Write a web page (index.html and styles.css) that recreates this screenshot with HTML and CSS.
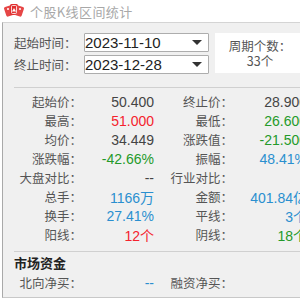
FILE: index.html
```html
<!DOCTYPE html>
<html lang="zh-CN">
<head>
  <meta charset="UTF-8">
  <title>个股K线区间统计</title>
  <link rel="stylesheet" href="styles.css">
</head>
<body>
  <div class="titlebar">
    <svg class="logo" width="20" height="14" viewBox="0 0 20 14">
      <rect x="1" y="3" width="8" height="10" rx="1.5" fill="#e64646" transform="rotate(-18 5 8)"/>
      <rect x="6" y="1" width="8" height="11" rx="1.5" fill="#e02f2f"/>
      <rect x="11" y="3" width="8" height="10" rx="1.5" fill="#e64646" transform="rotate(18 15 8)"/>
      <rect x="7.5" y="2.5" width="5" height="8" rx="1" fill="none" stroke="#fff" stroke-width="0.8"/>
      <path d="M10 5 L12 8.5 L8 8.5 Z" fill="#fff"/>
      <circle cx="4" cy="6" r="1" fill="#fff"/>
      <circle cx="16" cy="6" r="1" fill="#fff"/>
    </svg>
    <span class="title">个股K线区间统计</span>
  </div>

  <div class="panel">
    <div class="dates">
      <div class="date-fields">
        <div class="date-row">
          <span class="date-label">起始时间：</span>
          <div class="select"><span>2023-11-10</span><i class="arrow"></i></div>
        </div>
        <div class="date-row">
          <span class="date-label">终止时间：</span>
          <div class="select"><span>2023-12-28</span><i class="arrow"></i></div>
        </div>
      </div>
      <div class="period">
        <span>周期个数：</span>
        <span>33个</span>
      </div>
    </div>

    <div class="divider"></div>

    <div class="stats">
      <span class="label">起始价：</span><span class="val">50.400</span>
      <span class="label">终止价：</span><span class="val">28.900</span>

      <span class="label">最高：</span><span class="val red">51.000</span>
      <span class="label">最低：</span><span class="val green">26.600</span>

      <span class="label">均价：</span><span class="val">34.449</span>
      <span class="label">涨跌值：</span><span class="val green">-21.500</span>

      <span class="label">涨跌幅：</span><span class="val green">-42.66%</span>
      <span class="label">振幅：</span><span class="val blue">48.41%</span>

      <span class="label">大盘对比：</span><span class="val">--</span>
      <span class="label">行业对比：</span><span class="val"></span>

      <span class="label">总手：</span><span class="val blue">1166万</span>
      <span class="label">金额：</span><span class="val blue">401.84亿</span>

      <span class="label">换手：</span><span class="val blue">27.41%</span>
      <span class="label">平线：</span><span class="val blue">3个</span>

      <span class="label">阳线：</span><span class="val red">12个</span>
      <span class="label">阴线：</span><span class="val green">18个</span>
    </div>

    <div class="divider divider-low"></div>

    <div class="section-title">市场资金</div>

    <div class="stats funds">
      <span class="label">北向净买：</span><span class="val blue">--</span>
      <span class="label">融资净买：</span><span class="val"></span>
    </div>
  </div>
</body>
</html>
```

FILE: styles.css
```css
body {
  margin: 0;
  width: 300px;
  height: 300px;
  overflow: hidden;
  background: #fff;
  font-family: "Noto Sans CJK SC", "Liberation Sans", sans-serif;
  color: #555;
}

.titlebar {
  height: 22px;
  display: flex;
  align-items: center;
  padding-left: 4px;
  gap: 6px;
}

.logo {
  margin-top: -3px;
}

.title {
  font-size: 13px;
  color: #a8a8a8;
  letter-spacing: 0.4px;
}

.panel {
  margin-left: 2px;
  width: 320px;
  height: 274px;
  background: #f0f0f0;
  border-top: 1px solid #d4d4d4;
  border-left: 1px solid #a9a9a9;
  border-bottom: 1px solid #c8c8c8;
}

.dates {
  display: flex;
  padding: 10px 0 0 11px;
}

.date-fields {
  display: flex;
  flex-direction: column;
  gap: 3px;
}

.date-row {
  display: flex;
  align-items: center;
}

.date-label {
  width: 70px;
  font-size: 12.5px;
  color: #555;
}

.select {
  box-sizing: border-box;
  width: 125px;
  height: 19px;
  background: #fff;
  border: 1px solid #adadad;
  border-radius: 1px;
  display: flex;
  align-items: center;
  justify-content: space-between;
  padding: 0 6px 0 0;
  font-family: "Liberation Sans", sans-serif;
  font-size: 15px;
  color: #222;
}

.arrow {
  width: 0;
  height: 0;
  border-left: 5px solid transparent;
  border-right: 5px solid transparent;
  border-top: 5px solid #333;
}

.period {
  margin-left: 6px;
  width: 90px;
  height: 40px;
  background: #fff;
  display: flex;
  flex-direction: column;
  align-items: center;
  justify-content: center;
  font-size: 12.5px;
  line-height: 15px;
  color: #555;
}

.divider {
  margin: 13px 0 0 11px;
  border-top: 1px solid #d0d0d0;
}

.divider-low {
  margin-top: 7px;
}

.stats {
  display: grid;
  grid-template-columns: 79px 72px 79px 74px;
  grid-auto-rows: 19px;
  padding-top: 4px;
  align-items: center;
}

.label {
  text-align: right;
  font-size: 12.5px;
  color: #555;
}

.val {
  text-align: right;
  font-family: "Liberation Sans", "Noto Sans CJK SC", sans-serif;
  font-size: 14px;
  color: #444;
  white-space: nowrap;
}

.red { color: #f5222d; }
.green { color: #249a2a; }
.blue { color: #2a8fcf; }

.section-title {
  padding: 2px 0 0 11px;
  font-size: 13px;
  font-weight: bold;
  color: #222;
  line-height: 18px;
}

.funds {
  padding-top: 1px;
}
```
